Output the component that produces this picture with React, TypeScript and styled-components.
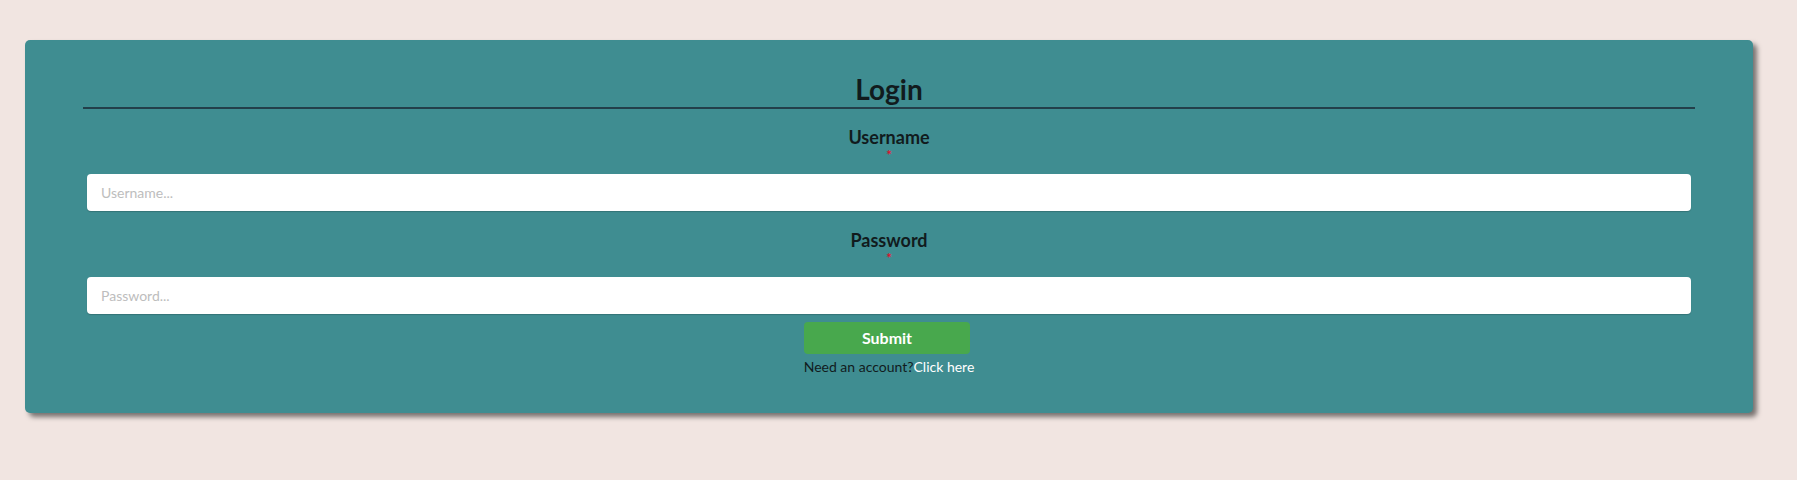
import React from "react";
import styled, { createGlobalStyle } from "styled-components";

const Global = createGlobalStyle`
  html, body { margin: 0; padding: 0; }
  body {
    background: #f1e5e1;
    font-family: Lato, "Open Sans", sans-serif;
  }
`;

const Page = styled.div`
  padding: 40px 44px 60px 25px;
`;

const Card = styled.form`
  background: #3f8d91;
  border-radius: 5px;
  box-shadow: 4px 4px 5px rgba(0, 0, 0, 0.5);
  padding: 32px 58px 38px;
  display: flex;
  flex-direction: column;
  align-items: center;
`;

const Title = styled.h2`
  margin: 0;
  font-size: 28px;
  line-height: 34px;
  font-weight: 700;
  color: #111b1d;
`;

const Rule = styled.div`
  align-self: stretch;
  height: 1.5px;
  margin-top: 1px;
  background: #233f4a;
`;

const Field = styled.div<{ $first?: boolean }>`
  align-self: stretch;
  display: flex;
  flex-direction: column;
  align-items: center;
  padding: 0 4px;
  margin-top: ${(p) => (p.$first ? "17px" : "18px")};
`;

const Label = styled.label`
  font-size: 18px;
  line-height: 22px;
  font-weight: 700;
  color: #111b1d;
`;

const Required = styled.span`
  display: block;
  font-size: 13px;
  font-weight: 700;
  line-height: 10px;
  height: 10px;
  margin-top: 2px;
  color: #e0102e;
`;

const Input = styled.input`
  align-self: stretch;
  box-sizing: border-box;
  height: 37px;
  margin-top: 14px;
  border: none;
  border-radius: 4px;
  background: #fff;
  box-shadow: 0 1px 1px rgba(0, 0, 0, 0.18);
  padding: 0 14px;
  font-family: Lato, sans-serif;
  font-size: 14px;
  color: #333;
  outline: none;
  &::placeholder {
    color: #bdbdbd;
  }
`;

const Submit = styled.button`
  margin: 8px 4px 0 0;
  width: 166px;
  height: 32px;
  border: none;
  border-radius: 4px;
  background: #48a84d;
  color: #fff;
  font-family: Lato, sans-serif;
  font-size: 16px;
  font-weight: 700;
  cursor: pointer;
`;

const Footer = styled.p`
  margin: 4px 0 0;
  font-size: 14px;
  line-height: 17px;
  color: #111b1d;
`;

const Link = styled.a`
  color: #ffffff;
  text-decoration: none;
`;

export default function App() {
  return (
    <>
      <Global />
      <Page>
        <Card onSubmit={(e) => e.preventDefault()}>
          <Title>Login</Title>
          <Rule />
          <Field $first>
            <Label>Username</Label>
            <Required>*</Required>
            <Input placeholder="Username..." />
          </Field>
          <Field>
            <Label>Password</Label>
            <Required>*</Required>
            <Input type="password" placeholder="Password..." />
          </Field>
          <Submit type="submit">Submit</Submit>
          <Footer>
            Need an account?<Link href="#">Click here</Link>
          </Footer>
        </Card>
      </Page>
    </>
  );
}
